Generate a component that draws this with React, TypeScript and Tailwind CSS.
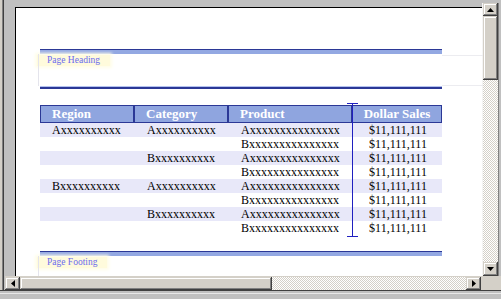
const rows = [
  { region: 'Axxxxxxxxxx', category: 'Axxxxxxxxxx', product: 'Axxxxxxxxxxxxxxx' },
  { region: '', category: '', product: 'Bxxxxxxxxxxxxxxx' },
  { region: '', category: 'Bxxxxxxxxxx', product: 'Axxxxxxxxxxxxxxx' },
  { region: '', category: '', product: 'Bxxxxxxxxxxxxxxx' },
  { region: 'Bxxxxxxxxxx', category: 'Axxxxxxxxxx', product: 'Axxxxxxxxxxxxxxx' },
  { region: '', category: '', product: 'Bxxxxxxxxxxxxxxx' },
  { region: '', category: 'Bxxxxxxxxxx', product: 'Axxxxxxxxxxxxxxx' },
  { region: '', category: '', product: 'Bxxxxxxxxxxxxxxx' },
]

const btn =
  'flex items-center justify-center bg-[#d4d0c8] shadow-[inset_-1px_-1px_#404040,inset_1px_1px_#d4d0c8,inset_-2px_-2px_#808080,inset_2px_2px_#ffffff]'
const track =
  'bg-[#d4d0c8] bg-[image:repeating-conic-gradient(#d4d0c8_0_25%,#ffffff_0_50%)] bg-size-[2px_2px] bg-[length:2px_2px]'

function Arrow({ dir }: { dir: 'up' | 'down' | 'left' | 'right' }) {
  if (dir === 'up' || dir === 'down') {
    return (
      <svg width="7" height="4" viewBox="0 0 7 4">
        <polygon points={dir === 'up' ? '3.5,0 7,4 0,4' : '0,0 7,0 3.5,4'} fill="#000" />
      </svg>
    )
  }
  return (
    <svg width="4" height="7" viewBox="0 0 4 7">
      <polygon points={dir === 'left' ? '4,0 4,7 0,3.5' : '0,0 0,7 4,3.5'} fill="#000" />
    </svg>
  )
}

function Band() {
  return <div className="h-[5px] border-t border-[#2b3896] bg-[#93a8e2]" />
}

function Label({ text }: { text: string }) {
  return (
    <div className="-ml-[3px] w-fit bg-[#fffbdc] pl-[10px] pr-[10px] text-[9.5px] leading-[11px] text-[#6b6bef] shadow-[0_0_3px_2px_#fffde8]">
      {text}
    </div>
  )
}

export default function App() {
  return (
    <div className="flex h-[299px] w-[501px] flex-col overflow-hidden bg-[#c0c0c0] font-['Liberation_Serif','Times_New_Roman',serif]">
      <div className="flex h-[290px]">
        {/* left frame lines */}
        <div className="flex w-[5px]">
          <div className="w-[2px] bg-[#d4d0c8]" />
          <div className="w-px bg-[#808080]" />
          <div className="w-px bg-[#404040]" />
          <div className="w-px bg-[#c0c0c0]" />
        </div>

        <div className="flex flex-1 flex-col">
          <div className="flex h-[276px]">
            {/* canvas */}
            <div className="flex flex-1 flex-col">
              <div className="h-[9px]" />
              <div className="ml-[10px] flex-1 border-l border-t border-black bg-white pl-[24px] pt-[41px]">
                {/* page heading */}
                <div className="relative w-[402px]">
                  <Band />
                  <div className="relative h-[32px] pt-px">
                    <div className="absolute -left-[2px] top-0 h-full w-px bg-[#e4e4ec]" />
                    <div className="absolute left-full top-px h-px w-[41px] bg-[#ececf0]" />
                    <div className="absolute bottom-0 left-full h-px w-[41px] bg-[#ececf0]" />
                    <Label text="Page Heading" />
                  </div>
                  <div className="h-px bg-[#b4c2ee]" />
                  <div className="h-[2px] bg-[#2b3896]" />
                </div>

                {/* table */}
                <div className="relative mt-[16px] w-[402px]">
                  <div className="flex h-[18px] border border-[#2b3896] bg-[#8fa5df] text-[13px] font-bold leading-[16px] text-white">
                    <div className="w-[94px] border-r-2 border-[#2b3896] pl-[11px]">Region</div>
                    <div className="w-[94px] border-r-2 border-[#2b3896] pl-[11px]">Category</div>
                    <div className="w-[124px] border-r-2 border-[#2b3896] pl-[11px]">Product</div>
                    <div className="flex-1 text-center">Dollar Sales</div>
                  </div>
                  {rows.map((r, i) => (
                    <div
                      key={i}
                      className={`flex h-[14px] text-[12px] leading-[14px] text-black ${i % 2 === 0 ? 'bg-[#e8e8f9]' : 'bg-white'}`}
                    >
                      <div className="w-[95px] pl-[12px]">{r.region}</div>
                      <div className="w-[94px] pl-[12px]">{r.category}</div>
                      <div className="w-[124px] pl-[12px]">{r.product}</div>
                      <div className="flex-1 pl-px text-center">$11,111,111</div>
                    </div>
                  ))}
                  {/* column resize marker */}
                  <div className="absolute left-[307px] top-[-2px] flex h-[134px] w-[11px] flex-col items-center">
                    <div className="h-px w-full bg-[#2020c0]" />
                    <div className="w-px flex-1 bg-[#2020c0]" />
                    <div className="h-px w-full bg-[#2020c0]" />
                  </div>
                </div>

                {/* page footing */}
                <div className="mt-[16px] w-[402px]">
                  <Band />
                  <div className="relative h-[20px] pt-px">
                    <div className="absolute -left-[2px] top-0 h-full w-px bg-[#e4e4ec]" />
                    <Label text="Page Footing" />
                  </div>
                </div>
              </div>
            </div>

            {/* vertical scrollbar */}
            <div className="flex w-[19px] flex-col bg-[#c0c0c0] pt-[3px]">
              <div className="flex flex-1">
                <div className="w-px bg-[#f4f4f4]" />
                <div className="flex w-[15px] flex-col">
                  <div className={`${btn} h-[13px]`}>
                    <Arrow dir="up" />
                  </div>
                  <div className={`${btn} h-[64px]`} />
                  <div className={`${track} flex-1`} />
                  <div className={`${btn} h-[14px]`}>
                    <Arrow dir="down" />
                  </div>
                </div>
                <div className="flex w-[3px]">
                  <div className="w-px bg-[#808080]" />
                </div>
              </div>
            </div>
          </div>

          {/* horizontal scrollbar */}
          <div className="flex h-[14px] border-t border-[#d4d0c8]">
            <div className={`${btn} w-[15px]`}>
              <Arrow dir="left" />
            </div>
            <div className={`${btn} w-[252px]`} />
            <div className={`${track} flex-1`} />
            <div className={`${btn} w-[15px]`}>
              <Arrow dir="right" />
            </div>
            <div className="w-[20px] bg-[#d4d0c8]" />
          </div>
        </div>
      </div>

      {/* bottom frame */}
      <div className="flex h-[9px] flex-col">
        <div className="h-px bg-[#404040]" />
        <div className="h-[2px] bg-[#c0c0c0]" />
        <div className="h-px bg-[#e8e8e8]" />
        <div className="flex-1 bg-[#c0c0c0]" />
      </div>
    </div>
  )
}
